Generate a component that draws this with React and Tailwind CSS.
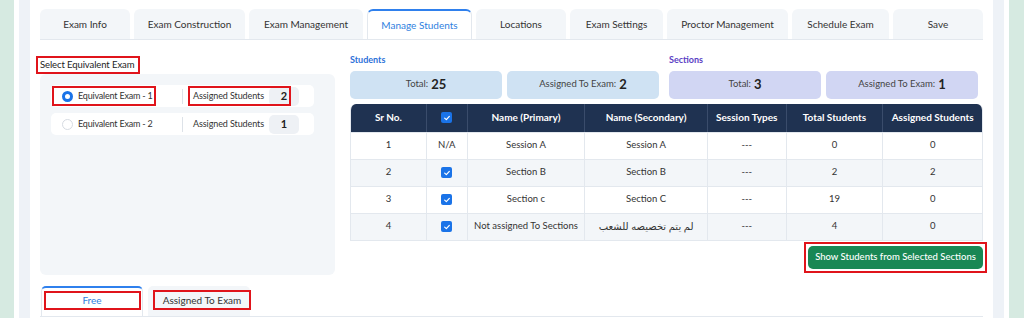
const tabs = [
  { label: 'Exam Info', w: 'w-[90px]' },
  { label: 'Exam Construction', w: 'w-[111px]' },
  { label: 'Exam Management', w: 'w-[114px]' },
  { label: 'Manage Students', w: 'w-[105px]', active: true },
  { label: 'Locations', w: 'w-[90px]' },
  { label: 'Exam Settings', w: 'w-[93px]' },
  { label: 'Proctor Management', w: 'w-[121px]' },
  { label: 'Schedule Exam', w: 'w-[97px]' },
  { label: 'Save', w: 'w-[90px]' },
]

const rows = [
  { sr: 1, na: true, primary: 'Session A', secondary: 'Session A', total: 0, assigned: 0 },
  { sr: 2, primary: 'Section B', secondary: 'Section B', total: 2, assigned: 2 },
  { sr: 3, primary: 'Section c', secondary: 'Section C', total: 19, assigned: 0 },
  { sr: 4, primary: 'Not assigned To Sections', secondary: 'لم يتم تخصيصه للشعب', total: 4, assigned: 0, rtl: true },
]

const cols = ['w-[76px]', 'w-[41px]', 'w-[118px]', 'w-[123px]', 'w-[79px]', 'w-[97px]', 'w-[99px]']

function Check() {
  return (
    <span className="inline-flex h-[11px] w-[11px] items-center justify-center rounded-[2px] bg-[#1a73e8]">
      <svg viewBox="0 0 12 12" className="h-[8px] w-[8px]">
        <path d="M2.5 6.2 5 8.5 9.5 3.5" fill="none" stroke="#fff" strokeWidth="1.8" strokeLinecap="round" strokeLinejoin="round" />
      </svg>
    </span>
  )
}

function ExamRow({ name, count, selected }) {
  return (
    <div className="relative flex h-[22px] w-[263px] items-center whitespace-nowrap rounded-[5px] bg-white text-[9px] text-[#333]">
      <span
        className={
          selected
            ? 'ml-[11px] h-[11px] w-[11px] shrink-0 rounded-full border-[3px] border-[#1a73e8] bg-white'
            : 'ml-[11px] h-[11px] w-[11px] shrink-0 rounded-full border border-[#d6dbe2] bg-white'
        }
      />
      <span className="ml-[5px] w-[104px] tracking-[-0.2px]">{name}</span>
      <span className="h-[15px] w-px bg-[#dde2e8]" />
      <span className="ml-[10px] w-[76px] tracking-[-0.1px]">Assigned Students</span>
      <span className="flex h-[19px] w-[30px] items-center justify-center rounded-[5px] bg-[#eef1f5] text-[11px] font-bold text-[#222]">
        {count}
      </span>
      {selected && (
        <>
          <span className="absolute left-[1px] top-[1px] h-[20px] w-[104px] border-2 border-[#e0141b]" />
          <span className="absolute left-[137px] top-[1px] h-[20px] w-[103px] border-2 border-[#e0141b]" />
        </>
      )}
    </div>
  )
}

function Stat({ label, value, bg }) {
  return (
    <div className={`flex h-[28px] w-[152px] items-center justify-center gap-[3px] whitespace-nowrap rounded-[5px] ${bg} text-[9.5px] text-[#444]`}>
      <span>{label}</span>
      <span className="text-[13px] font-bold text-[#222]">{value}</span>
    </div>
  )
}

export default function App() {
  return (
    <div className="flex h-[318px] w-[1024px] overflow-hidden bg-white font-['Lato','DejaVu_Sans',sans-serif]">
      <div className="w-[14px] bg-[#d6eae1]" />
      <div className="w-[5px] bg-white" />
      <div className="w-[11px] bg-[#eef2f7]" />

      <div className="flex w-[963px] flex-col px-[10px] pt-[9px]">
        {/* top tabs */}
        <div className="flex gap-[4px] border-b border-[#e3e8ee]">
          {tabs.map((t) => (
            <div
              key={t.label}
              className={
                t.active
                  ? `${t.w} flex h-[30px] items-center justify-center whitespace-nowrap rounded-t-[6px] border-x border-t-2 border-x-[#e3e8ee] border-t-[#2f80ed] bg-white text-[10px] text-[#2f7fe0]`
                  : `${t.w} flex h-[30px] items-center justify-center whitespace-nowrap rounded-t-[6px] bg-[#f3f6f9] text-[10px] text-[#333]`
              }
            >
              {t.label}
            </div>
          ))}
        </div>

        <div className="flex gap-[15px]">
          {/* left column */}
          <div className="flex w-[295px] flex-col pt-[16px]">
            <div className="-ml-[4px] flex h-[18px] w-[104px] items-center whitespace-nowrap border-2 border-[#e0141b] pl-[2px] text-[9.5px] tracking-[-0.1px] text-[#222]">
              Select Equivalent Exam
            </div>
            <div className="flex h-[201px] flex-col gap-[6px] rounded-[6px] bg-[#f3f6f9] p-[11px]">
              <ExamRow name="Equivalent Exam - 1" count="2" selected />
              <ExamRow name="Equivalent Exam - 2" count="1" />
            </div>
          </div>

          {/* right column */}
          <div className="flex w-[633px] flex-col pt-[13px]">
            <div className="flex gap-[10px]">
              <div className="flex w-[309px] flex-col gap-[4px]">
                <div className="text-[9px] font-bold text-[#2d72d9]">Students</div>
                <div className="flex gap-[5px]">
                  <Stat label="Total:" value="25" bg="bg-[#cfe2f3]" />
                  <Stat label="Assigned To Exam:" value="2" bg="bg-[#cfe2f3]" />
                </div>
              </div>
              <div className="flex w-[309px] flex-col gap-[4px]">
                <div className="text-[9px] font-bold text-[#5b3fc4]">Sections</div>
                <div className="flex gap-[5px]">
                  <Stat label="Total:" value="3" bg="bg-[#d1d6f3]" />
                  <Stat label="Assigned To Exam:" value="1" bg="bg-[#d1d6f3]" />
                </div>
              </div>
            </div>

            <div className="mt-[5px] overflow-hidden rounded-t-[6px] border-x border-b border-[#e3e8ee]">
              <div className="flex h-[28px] bg-[#1f3251] text-[10px] font-bold text-white">
                {['Sr No.', '', 'Name (Primary)', 'Name (Secondary)', 'Session Types', 'Total Students', 'Assigned Students'].map((h, i) => (
                  <div key={i} className={`${cols[i]} flex items-center justify-center whitespace-nowrap border-r border-[#3a4c6b] last:border-r-0`}>
                    {i === 1 ? <Check /> : h}
                  </div>
                ))}
              </div>
              {rows.map((r, idx) => {
                const cells = [
                  r.sr,
                  r.na ? 'N/A' : <Check />,
                  r.primary,
                  r.secondary,
                  '---',
                  r.total,
                  r.assigned,
                ]
                return (
                  <div
                    key={r.sr}
                    className={`flex h-[27px] border-t border-[#e3e8ee] text-[9.5px] text-[#333] ${idx % 2 === 1 ? 'bg-[#f3f6f9]' : 'bg-white'}`}
                  >
                    {cells.map((c, i) => (
                      <div
                        key={i}
                        dir={i === 3 && r.rtl ? 'rtl' : undefined}
                        className={`${cols[i]} flex items-center justify-center whitespace-nowrap border-r border-[#e3e8ee] last:border-r-0 ${i === 3 && r.rtl ? 'text-[10px]' : ''}`}
                      >
                        {c}
                      </div>
                    ))}
                  </div>
                )
              })}
            </div>

            <div className="mt-[1px] flex justify-end">
              <div className="-mr-[4px] border-2 border-[#e0141b] p-[2px]">
                <div className="flex h-[23px] w-[175px] items-center justify-center whitespace-nowrap rounded-[5px] bg-[#198754] text-[9.5px] font-medium text-white">
                  Show Students from Selected Sections
                </div>
              </div>
            </div>
          </div>
        </div>

        {/* bottom tabs */}
        <div className="mt-[11px] flex h-[31px] gap-[5px] border-b border-[#e3e8ee] pl-px">
          <div className="flex w-[102px] flex-col items-center rounded-t-[5px] border-x border-t-2 border-x-[#e3e8ee] border-t-[#2f80ed] bg-white pt-[3px]">
            <div className="flex h-[19px] w-[97px] items-center justify-center border-2 border-[#e0141b] text-[10px] text-[#2f7fe0]">
              Free
            </div>
          </div>
          <div className="flex w-[102px] flex-col items-end rounded-t-[5px] bg-[#f3f6f9] pt-[4px]">
            <div className="-mr-px flex h-[20px] w-[98px] items-center justify-center whitespace-nowrap border-2 border-[#e0141b] text-[10px] text-[#333]">
              Assigned To Exam
            </div>
          </div>
        </div>
      </div>

      <div className="w-[11px] bg-[#eef2f7]" />
      <div className="w-[5px] bg-white" />
      <div className="w-[15px] bg-[#d6eae1]" />
    </div>
  )
}
